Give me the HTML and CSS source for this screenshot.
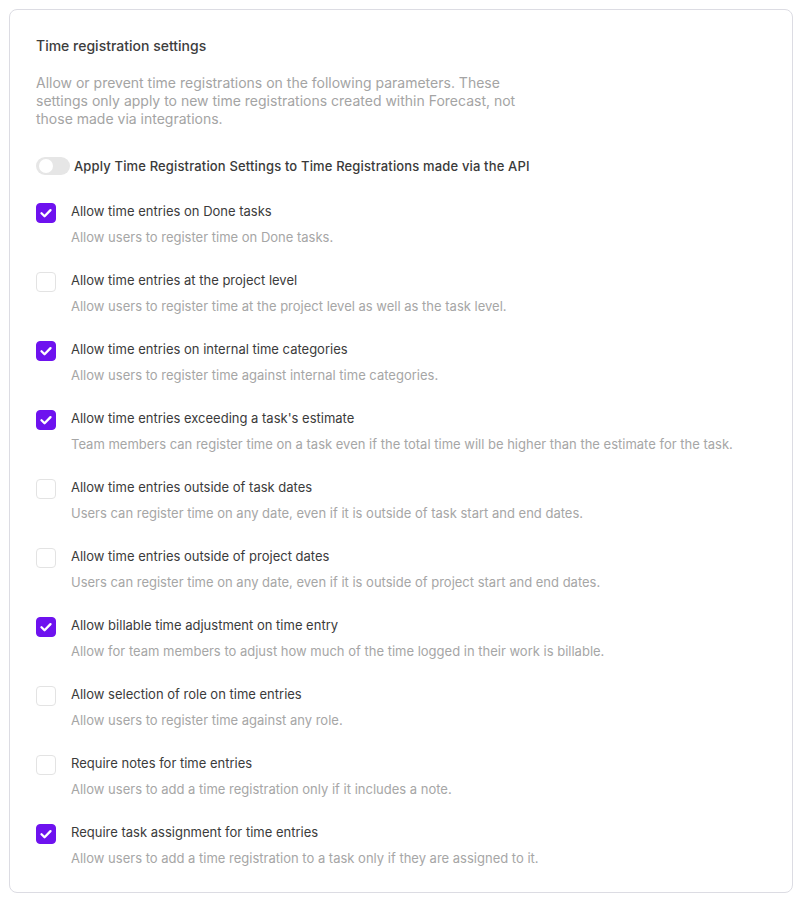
FILE: index.html
```html
<!DOCTYPE html>
<html lang="en">
<head>
  <meta charset="UTF-8" />
  <title>Time registration settings</title>
  <link rel="stylesheet" href="styles.css">
</head>
<body>
  <div class="card">
    <h2 class="title">Time registration settings</h2>
    <p class="intro">Allow or prevent time registrations on the following parameters. These settings only apply to new time registrations created within Forecast, not those made via integrations.</p>

    <label class="toggle-row">
      <span class="toggle"><span class="knob"></span></span>
      <span class="toggle-label">Apply Time Registration Settings to Time Registrations made via the API</span>
    </label>

    <ul class="settings">
      <li class="setting">
        <span class="box checked"><svg viewBox="0 0 20 20"><path d="M5 10.3l3.4 3.3 6.6-6.8" /></svg></span>
        <div class="text">
          <div class="name">Allow time entries on Done tasks</div>
          <div class="desc">Allow users to register time on Done tasks.</div>
        </div>
      </li>
      <li class="setting">
        <span class="box"></span>
        <div class="text">
          <div class="name">Allow time entries at the project level</div>
          <div class="desc">Allow users to register time at the project level as well as the task level.</div>
        </div>
      </li>
      <li class="setting">
        <span class="box checked"><svg viewBox="0 0 20 20"><path d="M5 10.3l3.4 3.3 6.6-6.8" /></svg></span>
        <div class="text">
          <div class="name">Allow time entries on internal time categories</div>
          <div class="desc">Allow users to register time against internal time categories.</div>
        </div>
      </li>
      <li class="setting">
        <span class="box checked"><svg viewBox="0 0 20 20"><path d="M5 10.3l3.4 3.3 6.6-6.8" /></svg></span>
        <div class="text">
          <div class="name">Allow time entries exceeding a task's estimate</div>
          <div class="desc">Team members can register time on a task even if the total time will be higher than the estimate for the task.</div>
        </div>
      </li>
      <li class="setting">
        <span class="box"></span>
        <div class="text">
          <div class="name">Allow time entries outside of task dates</div>
          <div class="desc">Users can register time on any date, even if it is outside of task start and end dates.</div>
        </div>
      </li>
      <li class="setting">
        <span class="box"></span>
        <div class="text">
          <div class="name">Allow time entries outside of project dates</div>
          <div class="desc">Users can register time on any date, even if it is outside of project start and end dates.</div>
        </div>
      </li>
      <li class="setting">
        <span class="box checked"><svg viewBox="0 0 20 20"><path d="M5 10.3l3.4 3.3 6.6-6.8" /></svg></span>
        <div class="text">
          <div class="name">Allow billable time adjustment on time entry</div>
          <div class="desc">Allow for team members to adjust how much of the time logged in their work is billable.</div>
        </div>
      </li>
      <li class="setting">
        <span class="box"></span>
        <div class="text">
          <div class="name">Allow selection of role on time entries</div>
          <div class="desc">Allow users to register time against any role.</div>
        </div>
      </li>
      <li class="setting">
        <span class="box"></span>
        <div class="text">
          <div class="name">Require notes for time entries</div>
          <div class="desc">Allow users to add a time registration only if it includes a note.</div>
        </div>
      </li>
      <li class="setting">
        <span class="box checked"><svg viewBox="0 0 20 20"><path d="M5 10.3l3.4 3.3 6.6-6.8" /></svg></span>
        <div class="text">
          <div class="name">Require task assignment for time entries</div>
          <div class="desc">Allow users to add a time registration to a task only if they are assigned to it.</div>
        </div>
      </li>
    </ul>
  </div>
</body>
</html>
```

FILE: styles.css
```css
body {
  font-family: 'Inter', 'Liberation Sans', sans-serif;
  background-color: #ffffff;
  color: #393946;
  margin: 0;
  padding: 9px;
}

.card {
  border: 1px solid #dcdce3;
  border-radius: 8px;
  padding: 26px 26px 23px 26px;
  height: 884px;
  box-sizing: border-box;
}

.title {
  font-size: 14px;
  font-weight: 500;
  color: #3d3d3d;
  margin: 0;
  line-height: 20px;
}

.intro {
  font-size: 14px;
  line-height: 18px;
  color: #a4a4a4;
  max-width: 505px;
  margin: 18px 0 0 0;
}

.toggle-row {
  display: flex;
  align-items: center;
  gap: 4px;
  margin-top: 29px;
}

.toggle {
  width: 34px;
  height: 18px;
  border-radius: 9px;
  background-color: #e6e6e6;
  position: relative;
  flex-shrink: 0;
}

.knob {
  position: absolute;
  left: 3px;
  top: 2px;
  width: 14px;
  height: 14px;
  border-radius: 50%;
  background-color: #ffffff;
}

.toggle-label {
  font-size: 13px;
  font-weight: 500;
  letter-spacing: 0.15px;
  color: #3a3a3a;
}

ul.settings {
  list-style: none;
  padding: 0;
  margin: 27px 0 0 0;
}

.setting {
  display: flex;
  align-items: flex-start;
  gap: 15px;
  height: 69px;
}

.box {
  width: 20px;
  height: 20px;
  box-sizing: border-box;
  border: 1px solid #e3e3e3;
  border-radius: 4px;
  background-color: #ffffff;
  flex-shrink: 0;
  margin-top: 1px;
}

.box.checked {
  background-color: #6e12ef;
  border-color: #6e12ef;
}

.box svg {
  display: block;
  width: 18px;
  height: 18px;
}

.box svg path {
  fill: none;
  stroke: #ffffff;
  stroke-width: 2.6;
  stroke-linecap: round;
  stroke-linejoin: round;
}

.name {
  font-size: 13px;
  line-height: 18px;
  color: #3b3b3b;
}

.desc {
  font-size: 13px;
  line-height: 18px;
  color: #a6a6a6;
  margin-top: 8px;
}
```
